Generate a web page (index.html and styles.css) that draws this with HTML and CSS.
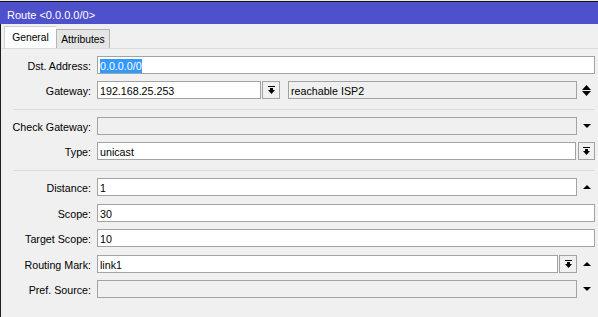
FILE: index.html
```html
<!DOCTYPE html>
<html lang="en">
<head>
    <meta charset="UTF-8">
    <title>Route &lt;0.0.0.0/0&gt;</title>
    <link rel="stylesheet" href="styles.css">
</head>
<body>
    <div class="desk"></div>
    <div class="window">
        <div class="titlebar">Route &lt;0.0.0.0/0&gt;</div>
        <div class="frame">
            <div class="tabs">
                <div class="tab active">General</div>
                <div class="tab">Attributes</div>
            </div>

            <div class="panel">
                <div class="group">
                    <div class="row">
                        <div class="label">Dst. Address:</div>
                        <div class="field"><span class="sel">0.0.0.0/0</span></div>
                    </div>
                    <div class="row">
                        <div class="label">Gateway:</div>
                        <div class="field gw">192.168.25.253</div>
                        <div class="btn"><svg width="7" height="8" viewBox="0 0 7 8"><rect x="0" y="0" width="7" height="1"/><rect x="2" y="2" width="3" height="2"/><path d="M0 4h7L3.5 8z"/></svg></div>
                        <div class="field off gw2">reachable ISP2</div>
                        <div class="arrow"><svg width="9" height="11" viewBox="0 0 9 11"><path d="M0 5h9L4.5 0z"/><path d="M0 6h9L4.5 11z"/></svg></div>
                    </div>
                </div>

                <div class="sep"></div>

                <div class="group">
                    <div class="row">
                        <div class="label">Check Gateway:</div>
                        <div class="field off"></div>
                        <div class="arrow"><svg width="8" height="4" viewBox="0 0 8 4"><path d="M0 0h8L4 4z"/></svg></div>
                    </div>
                    <div class="row">
                        <div class="label">Type:</div>
                        <div class="field">unicast</div>
                        <div class="btn wide"><svg width="7" height="8" viewBox="0 0 7 8"><rect x="0" y="0" width="7" height="1"/><rect x="2" y="2" width="3" height="2"/><path d="M0 4h7L3.5 8z"/></svg></div>
                    </div>
                </div>

                <div class="sep"></div>

                <div class="group loose">
                    <div class="row">
                        <div class="label">Distance:</div>
                        <div class="field">1</div>
                        <div class="arrow"><svg width="8" height="4" viewBox="0 0 8 4"><path d="M0 4h8L4 0z"/></svg></div>
                    </div>
                    <div class="row">
                        <div class="label">Scope:</div>
                        <div class="field">30</div>
                    </div>
                    <div class="row">
                        <div class="label">Target Scope:</div>
                        <div class="field">10</div>
                    </div>
                    <div class="row">
                        <div class="label">Routing Mark:</div>
                        <div class="field">link1</div>
                        <div class="btn"><svg width="7" height="8" viewBox="0 0 7 8"><rect x="0" y="0" width="7" height="1"/><rect x="2" y="2" width="3" height="2"/><path d="M0 4h7L3.5 8z"/></svg></div>
                        <div class="arrow"><svg width="8" height="4" viewBox="0 0 8 4"><path d="M0 4h8L4 0z"/></svg></div>
                    </div>
                    <div class="row">
                        <div class="label">Pref. Source:</div>
                        <div class="field off"></div>
                        <div class="arrow"><svg width="8" height="4" viewBox="0 0 8 4"><path d="M0 0h8L4 4z"/></svg></div>
                    </div>
                </div>
            </div>
        </div>
    </div>
</body>
</html>
```

FILE: styles.css
```css
body {
    margin: 0;
    background: #f0f0f0;
    font-family: 'Liberation Sans', Arial, sans-serif;
    font-size: 10.7px;
    color: #000;
    height: 317px;
    overflow: hidden;
}
.desk {
    height: 1px;
    background: #e9e9e9;
}
.window {
    border-top: 1px solid #111;
}
.titlebar {
    height: 22px;
    box-sizing: border-box;
    padding: 6px 0 0 7px;
    line-height: 14px;
    font-size: 11px;
    background: #4f51cc;
    color: #fff;
}
.frame {
    border-left: 1px solid #1e1e1e;
    height: 300px;
}
.tabs {
    display: flex;
    align-items: flex-end;
    height: 24px;
    padding-left: 3px;
}
.tab {
    box-sizing: border-box;
    width: 54px;
    height: 19px;
    padding-top: 4px;
    line-height: 12px;
    font-size: 10.3px;
    text-align: center;
    background: #e5e5e5;
    border: 1px solid #b4b4b4;
    border-bottom: none;
}
.tab.active {
    width: 52px;
    height: 22px;
    padding-top: 5px;
    background: #fdfdfd;
    border-color: #d2d2d2;
    border-right: none;
}
.panel {
    border-top: 1px solid #dcdcdc;
    padding: 7px 3px 0 0;
}
.group {
    display: flex;
    flex-direction: column;
    gap: 7px;
}
.group.loose {
    gap: 7.5px;
}
.row {
    display: flex;
    height: 18px;
}
.label {
    width: 90px;
    margin-right: 6px;
    text-align: right;
    padding-top: 3px;
    line-height: 14px;
    white-space: nowrap;
}
.field {
    flex: 1;
    box-sizing: border-box;
    height: 18px;
    border: 1px solid #a3a3a3;
    background: #fff;
    padding: 2px 0 0 2px;
    line-height: 14px;
    white-space: nowrap;
    overflow: hidden;
}
.field.off {
    background: #f0f0f0;
}
.field.gw {
    flex: none;
    width: 164px;
}
.field.gw2 {
    margin-left: 8px;
}
.sel {
    display: inline-block;
    background: #3399ff;
    color: #fff;
    margin-top: -1px;
    line-height: 15px;
}
.btn {
    flex: none;
    box-sizing: border-box;
    width: 18px;
    height: 18px;
    margin-left: 1px;
    border: 1px solid #a3a3a3;
    background: #f0f0f0;
    display: flex;
    align-items: center;
    justify-content: center;
}
.btn.wide {
    width: 17px;
    margin-left: 2px;
}
.arrow {
    flex: none;
    width: 18px;
    display: flex;
    align-items: center;
    justify-content: center;
    padding-left: 1px;
    box-sizing: border-box;
}
.sep {
    height: 1px;
    background: #dcdcdc;
    margin: 10px 0 7px 12px;
}
```
